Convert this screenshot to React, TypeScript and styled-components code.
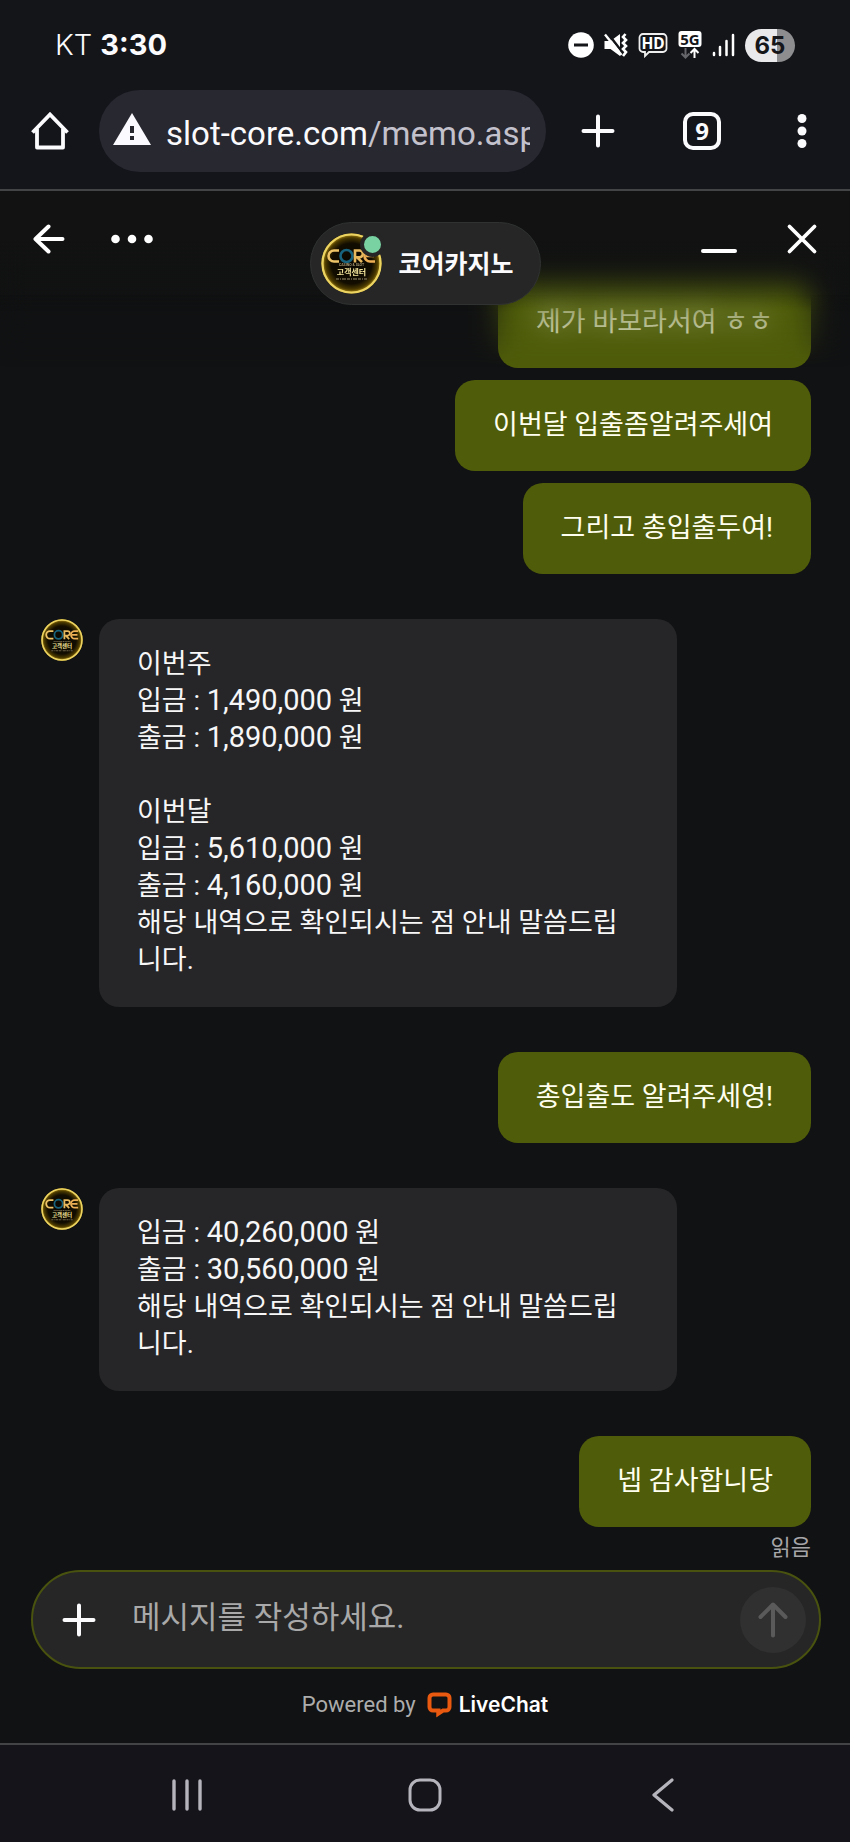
import React from "react";
import styled, { createGlobalStyle } from "styled-components";

const GlobalStyle = createGlobalStyle`
  *, *::before, *::after { box-sizing: border-box; }
  body {
    margin: 0;
    background: #111212;
    color: #fbfbfd;
    font-family: Roboto, "Noto Sans CJK KR", sans-serif;
  }
  button {
    display: flex;
    align-items: center;
    justify-content: center;
    padding: 0;
    border: 0;
    background: none;
    color: inherit;
    font: inherit;
    cursor: pointer;
  }
  svg { display: block; flex: none; }
`;

const Screen = styled.div`
  display: flex;
  flex-direction: column;
  min-height: 100vh;
`;

/* ---------- Phone status bar ---------- */

const StatusBar = styled.div`
  display: flex;
  align-items: center;
  justify-content: space-between;
  height: 90px;
  padding: 0 55px;
  background: #141519;
`;

const Clock = styled.div`
  font-family: Inter, sans-serif;
  font-size: 29px;
  line-height: 36px;
  font-weight: 300;

  strong { font-weight: 700; }
`;

const StatusIcons = styled.div`
  display: flex;
  align-items: center;
  gap: 10px;
`;

const Battery = styled.div`
  display: flex;
  align-items: center;
  justify-content: center;
  width: 50px;
  height: 33px;
  border-radius: 17px;
  background: linear-gradient(90deg, #e9e9ec 64%, #8d8d90 64%);
  color: #15161a;
  font-family: Inter, sans-serif;
  font-size: 24px;
  font-weight: 700;
  line-height: 33px;
`;

/* ---------- Browser toolbar ---------- */

const Toolbar = styled.header`
  display: flex;
  align-items: center;
  padding: 0 0 17px 31px;
  background: #14141b;
  border-bottom: 2px solid #434446;
`;

const HomeButton = styled.button`
  width: 38px;
  height: 38px;
  margin-right: 30px;
`;

const AddressBar = styled.div`
  flex: 1;
  display: flex;
  align-items: center;
  gap: 15px;
  min-width: 0;
  height: 82px;
  padding: 0 16px 0 14px;
  border-radius: 41px;
  background: #282831;
`;

const Address = styled.div`
  flex: 1;
  overflow: hidden;
  padding-top: 5px;
  font-size: 33px;
  line-height: 42px;
  white-space: nowrap;

  span { color: #c3c2cc; }
`;

const ToolbarActions = styled.div`
  display: grid;
  grid-template-columns: 104px 104px 96px;
  height: 82px;
`;

const TabCount = styled.span`
  display: flex;
  align-items: center;
  justify-content: center;
  width: 38px;
  height: 38px;
  border: 4px solid currentColor;
  border-radius: 10px;
  font-family: "Noto Sans", sans-serif;
  font-size: 24px;
  line-height: 24px;
  font-weight: 700;
`;

/* ---------- Chat ---------- */

const Chat = styled.main`
  position: relative;
  flex: 1;
  display: flex;
  flex-direction: column;
  overflow: hidden;
  background: #111213;
`;

const ChatHeader = styled.div`
  position: absolute;
  inset: 0 0 auto 0;
  z-index: 2;
  display: grid;
  grid-template-columns: 1fr auto 1fr;
  align-items: start;
  padding: 31px 32px 0 33px;
`;

const HeaderFade = styled.div`
  position: absolute;
  inset: 0 0 auto 0;
  z-index: 1;
  height: 176px;
  background: linear-gradient(#111211 0, #111211 48px, rgba(17, 18, 17, 0) 120px);
  backdrop-filter: blur(14px);
  mask-image: linear-gradient(#000 0, #000 104px, rgba(0, 0, 0, 0.6) 122px, rgba(0, 0, 0, 0.4) 144px, transparent 176px);
`;

const HeaderGroup = styled.div<{ $end?: boolean }>`
  display: flex;
  justify-content: ${(p) => (p.$end ? "flex-end" : "flex-start")};
  gap: ${(p) => (p.$end ? 48 : 46)}px;
`;

const HeaderButton = styled.button`
  height: 34px;
`;

const AgentPill = styled.div`
  display: flex;
  align-items: center;
  gap: 16px;
  height: 83px;
  padding: 0 26px 0 10px;
  border: 1px solid #303232;
  border-radius: 42px;
  background: #252625;
`;

const AgentName = styled.h1`
  margin: 0;
  padding-top: 3px;
  font-size: 25px;
  line-height: 36px;
  font-weight: 700;
`;

const AvatarFrame = styled.span`
  position: relative;
  display: block;
`;

const OnlineDot = styled.span`
  position: absolute;
  top: -1px;
  right: -3px;
  width: 25px;
  height: 25px;
  border: 4px solid #252625;
  border-radius: 50%;
  background: #78d2a2;
`;

const Messages = styled.div`
  flex: 1;
  display: flex;
  flex-direction: column;
  justify-content: flex-end;
  gap: 45px;
  padding: 86px 39px 9px 41px;
`;

const OwnGroup = styled.div`
  display: flex;
  flex-direction: column;
  align-items: flex-end;
  gap: 12px;
`;

const AgentGroup = styled.div`
  display: flex;
  align-items: flex-start;
  gap: 16px;
`;

const Bubble = styled.p<{ $own?: boolean }>`
  max-width: 75%;
  margin: 0;
  padding: ${(p) => (p.$own ? "27px 38px" : "27px 38px 28px")};
  border-radius: 20px;
  background: ${(p) => (p.$own ? "#4f5d0a" : "#262628")};
  color: ${(p) => (p.$own ? "#fffff0" : "#f7f7f8")};
  font-size: 27px;
  line-height: 37px;
`;

const Amount = styled.span`
  font-size: 29px;
  line-height: 1;
`;

const ReadMark = styled.span`
  margin-top: -4px;
  color: #a6a5a8;
  font-size: 22px;
  line-height: 26px;
`;

const Composer = styled.form`
  display: flex;
  align-items: center;
  height: 99px;
  margin: 0 29px 0 31px;
  padding: 0 13px 0 29px;
  border: 2px solid #49530f;
  border-radius: 50px;
  background: #262626;
`;

const MessageInput = styled.input`
  flex: 1;
  min-width: 0;
  height: 56px;
  margin: 0 20px 4px 36px;
  padding: 0;
  border: 0;
  outline: 0;
  background: none;
  color: #fff;
  font-family: inherit;
  font-size: 31px;

  &::placeholder { color: #a9a9a9; opacity: 1; }
`;

const SendButton = styled.button`
  width: 66px;
  height: 66px;
  border-radius: 50%;
  background: #303030;
  color: #5a5a5b;
`;

const PoweredBy = styled.footer`
  display: flex;
  align-items: center;
  justify-content: center;
  gap: 11px;
  padding: 21px 0 23px;
  color: #acacac;
  font-size: 22px;
  line-height: 30px;
`;

const BrandLink = styled.a`
  display: flex;
  align-items: center;
  gap: 7px;
  color: #fff;
  font-family: Inter, sans-serif;
  font-size: 21px;
  font-weight: 600;
  text-decoration: none;
`;

const NavBar = styled.nav`
  display: grid;
  grid-template-columns: repeat(3, 1fr);
  height: 99px;
  padding: 2px 8% 0;
  border-top: 2px solid #434446;
  background: #15141a;
  color: #b5b4bc;
`;

/* ---------- Drawings ---------- */

function Avatar({ size }: { size: number }) {
  return (
    <svg width={size} height={size} viewBox="0 0 61 61" role="img" aria-label="CORE 고객센터">
      <defs>
        <radialGradient id={`glow${size}`}>
          <stop offset="0" stopColor="#080600" />
          <stop offset="0.68" stopColor="#120d00" />
          <stop offset="0.86" stopColor="#4a3900" />
          <stop offset="1" stopColor="#c49d1a" />
        </radialGradient>
      </defs>
      <circle cx="30.500" cy="30.500" r="30" fill={`url(#glow${size})`} />
      <circle cx="30.500" cy="30.500" r="29" fill="none" stroke="#ecd463" strokeWidth="2.200" />
      <g fill="none" strokeWidth="2.600">
        <path d="M18 17.500h-5a5.500 5.500 0 0 0 0 11h5" stroke="#eec468" />
        <circle cx="25.500" cy="23" r="6" stroke="#17627c" />
        <path d="M34 29.500V17.500h4.500a3.300 3.300 0 0 1 0 6.700H36l5 5" stroke="#e7b95e" />
        <path d="M54 17.500h-5a5.500 5.500 0 0 0 0 11h5M45 23h8" stroke="#eeb055" />
      </g>
      <g textAnchor="middle" fontWeight="700">
        <text x="30.500" y="33" fontSize="3.500" fill="#a39570">CASINO &amp; SLOT</text>
        <text x="30.500" y="42" fontSize="8" fill="#f1e39a">고객센터</text>
      </g>
      <path d="M15 46h31" stroke="#6e6449" strokeWidth="1.500" strokeDasharray="3 1 1 1 4 1" />
    </svg>
  );
}

const DndIcon = () => (
  <svg width="26" height="26" viewBox="0 0 26 26">
    <circle cx="13" cy="13" r="12.800" fill="#fff" />
    <path d="M6 13h14" stroke="#141519" strokeWidth="3" />
  </svg>
);

const MuteIcon = () => (
  <svg width="24" height="24" viewBox="0 0 24 24" fill="none" stroke="#fff">
    <path d="M0.500 8h6L16 1v22l-9.500-7h-6z" fill="#fff" stroke="none" />
    <path d="M3.500 0l17 22" stroke="#141519" strokeWidth="2.500" />
    <path d="M1 1.500l16.500 20.500" strokeWidth="2.400" />
    <path d="M21.500 1l-2.500 3 3 3-3 3 3 3-3 3 3 3-3 4" strokeWidth="2.600" />
  </svg>
);

const HdIcon = () => (
  <svg width="30" height="26" viewBox="0 0 30 26">
    <path
      d="M5 2h20a3.500 3.500 0 0 1 3.500 3.500v11a3.500 3.500 0 0 1-3.500 3.500H11l-4 4v-4H5a3.500 3.500 0 0 1-3.500-3.500v-11A3.500 3.500 0 0 1 5 2z"
      fill="none"
      stroke="#eee"
      strokeWidth="1.800"
    />
    <text x="15" y="17" textAnchor="middle" fontFamily="Noto Sans" fontSize="15.500" fontWeight="700" fill="#fff">
      HD
    </text>
  </svg>
);

const FiveGIcon = () => (
  <svg width="24" height="30" viewBox="0 0 24 30">
    <rect x="0.500" y="1" width="23" height="16" rx="3" fill="#fff" />
    <text x="12" y="14.500" textAnchor="middle" fontFamily="Noto Sans" fontSize="15" fontWeight="700" fill="#141519">
      5G
    </text>
    <g fill="none" strokeWidth="2">
      <path d="M7.500 18v9M3.500 23.500l4 4 4-4" stroke="#66676b" />
      <path d="M16.500 28v-9M12.500 23l4-4 4 4" stroke="#fff" />
    </g>
  </svg>
);

const SignalIcon = () => (
  <svg width="23" height="24" viewBox="0 0 23 24" stroke="#fff" strokeWidth="2.500" strokeLinecap="round">
    <path d="M2 20v2M8 14v8M14.500 8v14M21 2v20" />
  </svg>
);

const HomeIcon = () => (
  <svg width="38" height="38" viewBox="0 0 38 38" fill="none" stroke="currentColor" strokeWidth="3.800">
    <path d="M1.500 20.500L19 2.500l17.500 18" />
    <path d="M6 17v18.500h26V17" strokeLinejoin="round" />
  </svg>
);

const WarningIcon = () => (
  <svg width="38" height="36" viewBox="0 0 38 36">
    <path d="M19 0l19 32H0z" fill="#fbfaff" />
    <path d="M19 13v7M19 23v4" stroke="#282831" strokeWidth="4" />
  </svg>
);

const PlusIcon = () => (
  <svg width="34" height="34" viewBox="0 0 34 34" stroke="currentColor" strokeWidth="4" strokeLinecap="round">
    <path d="M17 2.500v29M2.500 17h29" />
  </svg>
);

const KebabIcon = () => (
  <svg width="10" height="36" viewBox="0 0 10 36" fill="currentColor">
    <circle cx="5" cy="5.500" r="4.500" />
    <circle cx="5" cy="18" r="4.500" />
    <circle cx="5" cy="30.500" r="4.500" />
  </svg>
);

const BackArrowIcon = () => (
  <svg width="32" height="30" viewBox="0 0 32 30" fill="none" stroke="#fff" strokeWidth="4" strokeLinecap="round" strokeLinejoin="round">
    <path d="M29.500 15H3M15.500 2.500L2.500 15l13 12.500" />
  </svg>
);

const MoreIcon = () => (
  <svg width="42" height="10" viewBox="0 0 42 10" fill="#fff">
    <circle cx="4.500" cy="5" r="4.300" />
    <circle cx="21" cy="5" r="4.300" />
    <circle cx="37.500" cy="5" r="4.300" />
  </svg>
);

const MinimizeIcon = () => (
  <svg width="38" height="34" viewBox="0 0 38 34" stroke="#fff" strokeWidth="4" strokeLinecap="round">
    <path d="M3 29h32" />
  </svg>
);

const CloseIcon = () => (
  <svg width="32" height="32" viewBox="0 0 32 32" stroke="#fff" strokeWidth="3.800" strokeLinecap="round">
    <path d="M3.500 3.500l25 25M28.500 3.500l-25 25" />
  </svg>
);

const SendIcon = () => (
  <svg width="30" height="36" viewBox="0 0 30 36" fill="none" stroke="currentColor" strokeWidth="4" strokeLinecap="round" strokeLinejoin="round">
    <path d="M15 33.500V2.500M2.500 15L15 2.500 27.500 15" />
  </svg>
);

const LiveChatLogo = () => (
  <svg width="25" height="26" viewBox="0 0 25 26">
    <path
      d="M6 2.500h13a3.500 3.500 0 0 1 3.500 3.500v9a3.500 3.500 0 0 1-3.500 3.500h-3l-4.500 3v-3H6A3.500 3.500 0 0 1 2.500 15V6A3.500 3.500 0 0 1 6 2.500z"
      fill="none"
      stroke="#e9590f"
      strokeWidth="4"
    />
    <path d="M9.500 18h5l-5 7.500z" fill="#e9590f" />
  </svg>
);

const RecentsIcon = () => (
  <svg width="32" height="34" viewBox="0 0 32 34" stroke="currentColor" strokeWidth="3.400" strokeLinecap="round">
    <path d="M3 3v28M16 3v28M29 3v28" />
  </svg>
);

const NavHomeIcon = () => (
  <svg width="34" height="34" viewBox="0 0 34 34" fill="none" stroke="currentColor" strokeWidth="3">
    <rect x="2" y="2" width="30" height="30" rx="10" />
  </svg>
);

const NavBackIcon = () => (
  <svg width="22" height="34" viewBox="0 0 22 34" fill="none" stroke="currentColor" strokeWidth="3.200" strokeLinecap="round" strokeLinejoin="round">
    <path d="M20 2L2 17l18 15" />
  </svg>
);

/* ---------- Page ---------- */

function AgentMessage({ children }: { children: React.ReactNode }) {
  return (
    <AgentGroup>
      <Avatar size={42} />
      <Bubble>{children}</Bubble>
    </AgentGroup>
  );
}

export default function App() {
  return (
    <Screen>
      <GlobalStyle />
      <StatusBar>
        <Clock>
          KT <strong>3:30</strong>
        </Clock>
        <StatusIcons>
          <DndIcon />
          <MuteIcon />
          <HdIcon />
          <FiveGIcon />
          <SignalIcon />
          <Battery>65</Battery>
        </StatusIcons>
      </StatusBar>

      <Toolbar>
        <HomeButton aria-label="홈">
          <HomeIcon />
        </HomeButton>
        <AddressBar>
          <WarningIcon />
          <Address>
            slot-core.com<span>/memo.asp</span>
          </Address>
        </AddressBar>
        <ToolbarActions>
          <button aria-label="새 탭">
            <PlusIcon />
          </button>
          <button aria-label="탭 목록">
            <TabCount>9</TabCount>
          </button>
          <button aria-label="메뉴">
            <KebabIcon />
          </button>
        </ToolbarActions>
      </Toolbar>

      <Chat>
        <HeaderFade />
        <ChatHeader>
          <HeaderGroup>
            <HeaderButton aria-label="뒤로">
              <BackArrowIcon />
            </HeaderButton>
            <HeaderButton aria-label="더보기">
              <MoreIcon />
            </HeaderButton>
          </HeaderGroup>
          <AgentPill>
            <AvatarFrame>
              <Avatar size={61} />
              <OnlineDot />
            </AvatarFrame>
            <AgentName>코어카지노</AgentName>
          </AgentPill>
          <HeaderGroup $end>
            <HeaderButton aria-label="최소화">
              <MinimizeIcon />
            </HeaderButton>
            <HeaderButton aria-label="닫기">
              <CloseIcon />
            </HeaderButton>
          </HeaderGroup>
        </ChatHeader>

        <Messages>
          <OwnGroup>
            <Bubble $own>제가 바보라서여 ㅎㅎ</Bubble>
            <Bubble $own>이번달 입출좀알려주세여</Bubble>
            <Bubble $own>그리고 총입출두여!</Bubble>
          </OwnGroup>
          <AgentMessage>
            이번주
            <br />
            입금 : <Amount>1,490,000</Amount> 원
            <br />
            출금 : <Amount>1,890,000</Amount> 원
            <br />
            <br />
            이번달
            <br />
            입금 : <Amount>5,610,000</Amount> 원
            <br />
            출금 : <Amount>4,160,000</Amount> 원
            <br />
            해당 내역으로 확인되시는 점 안내 말씀드립니다.
          </AgentMessage>
          <OwnGroup>
            <Bubble $own>총입출도 알려주세영!</Bubble>
          </OwnGroup>
          <AgentMessage>
            입금 : <Amount>40,260,000</Amount> 원
            <br />
            출금 : <Amount>30,560,000</Amount> 원
            <br />
            해당 내역으로 확인되시는 점 안내 말씀드립니다.
          </AgentMessage>
          <OwnGroup>
            <Bubble $own>넵 감사합니당</Bubble>
            <ReadMark>읽음</ReadMark>
          </OwnGroup>
        </Messages>

        <Composer onSubmit={(e) => e.preventDefault()}>
          <button type="button" aria-label="첨부">
            <PlusIcon />
          </button>
          <MessageInput type="text" aria-label="메시지" placeholder="메시지를 작성하세요." />
          <SendButton type="submit" aria-label="보내기">
            <SendIcon />
          </SendButton>
        </Composer>
        <PoweredBy>
          Powered by
          <BrandLink href="#livechat">
            <LiveChatLogo />
            LiveChat
          </BrandLink>
        </PoweredBy>
      </Chat>

      <NavBar>
        <button aria-label="최근 앱">
          <RecentsIcon />
        </button>
        <button aria-label="홈 화면">
          <NavHomeIcon />
        </button>
        <button aria-label="이전">
          <NavBackIcon />
        </button>
      </NavBar>
    </Screen>
  );
}
